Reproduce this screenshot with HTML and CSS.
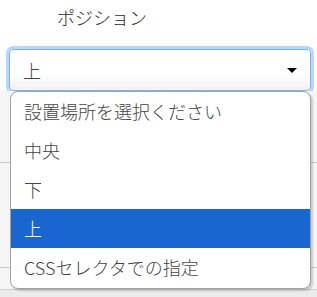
FILE: index.html
```html
<!DOCTYPE html>
<html lang="ja">
<head>
    <meta charset="UTF-8">
    <meta name="viewport" content="width=device-width, initial-scale=1.0">
    <title>ポジション</title>
    <link rel="stylesheet" href="styles.css">
</head>
<body>
    <div class="page">
        <div class="field-label">ポジション</div>

        <div class="select-box">
            <span class="select-value">上</span>
            <span class="select-arrow"></span>
        </div>

        <div class="backdrop">
            <div class="bg-row bg-row-a"></div>
            <div class="bg-row bg-row-b"></div>
            <div class="bg-row bg-row-c"></div>
            <div class="bg-foot"></div>
        </div>

        <ul class="dropdown">
            <li class="option">設置場所を選択ください</li>
            <li class="option">中央</li>
            <li class="option">下</li>
            <li class="option selected">上</li>
            <li class="option">CSSセレクタでの指定</li>
        </ul>
    </div>
</body>
</html>
```

FILE: styles.css
```css
body {
    margin: 0;
    padding: 0;
    background-color: #ffffff;
    font-family: "Noto Sans CJK JP", "Noto Sans", sans-serif;
    font-weight: 300;
    color: #333333;
}
.page {
    position: relative;
    width: 317px;
    height: 297px;
    overflow: hidden;
}
.field-label {
    height: 46px;
    padding-left: 57px;
    box-sizing: border-box;
    padding-top: 5px;
    font-size: 18px;
    line-height: 24px;
    color: #2a2a2a;
}
.select-box {
    margin: 3px 0 0 9px;
    width: 302px;
    height: 42px;
    box-sizing: border-box;
    border: 1px solid #7eb2ee;
    border-radius: 4px;
    box-shadow: 0 0 0 3px rgba(130, 180, 245, 0.55);
    background: linear-gradient(#ffffff, #ffffff 60%, #f1f1f1);
    display: flex;
    align-items: center;
    justify-content: space-between;
    padding: 0 13px 0 13px;
    font-size: 18px;
    color: #444444;
}
.select-arrow {
    width: 0;
    height: 0;
    border-left: 5px solid transparent;
    border-right: 5px solid transparent;
    border-top: 5px solid #000000;
}
.backdrop {
    display: flex;
    flex-direction: column;
}
.bg-row {
    background-color: #f5f5f5;
    border-bottom: 1px solid #c9c9c9;
}
.bg-row-a {
    height: 71px;
}
.bg-row-b {
    height: 104px;
}
.bg-row-c {
    height: 21px;
    border-bottom-color: #d0d0d0;
}
.bg-foot {
    height: 20px;
    background-color: #ebebeb;
}
.dropdown {
    position: absolute;
    top: 91px;
    left: 10px;
    width: 301px;
    margin: 0;
    padding: 0 0 1px;
    list-style: none;
    box-sizing: border-box;
    background: #ffffff;
    border: 1px solid #a3a3a3;
    border-radius: 8px;
    box-shadow: 2px 2px 2px rgba(0, 0, 0, 0.18);
    overflow: hidden;
}
.option {
    height: 39px;
    line-height: 39px;
    padding-left: 13px;
    font-size: 18px;
    color: #444444;
    white-space: nowrap;
}
.option.selected {
    background-color: #1a66d1;
    color: #ffffff;
}
```
